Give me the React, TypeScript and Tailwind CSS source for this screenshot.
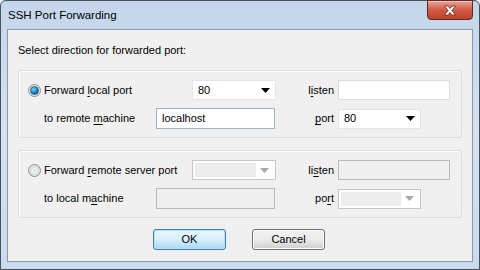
import React from "react";

const font = { fontFamily: '"Liberation Sans", Arial, sans-serif' };

function Radio({ checked }: { checked?: boolean }) {
  return (
    <svg width="13" height="13" viewBox="0 0 13 13" className="shrink-0">
      <defs>
        <radialGradient id="rbg" cx="50%" cy="50%" r="60%">
          <stop offset="0%" stopColor="#ffffff" />
          <stop offset="100%" stopColor="#d4d8dc" />
        </radialGradient>
        <radialGradient id="dot" cx="40%" cy="35%" r="70%">
          <stop offset="0%" stopColor="#7fd6f5" />
          <stop offset="55%" stopColor="#1e8fc6" />
          <stop offset="100%" stopColor="#0b4a78" />
        </radialGradient>
      </defs>
      <circle cx="6.5" cy="6.5" r="6" fill="url(#rbg)" stroke="#8e8f8f" strokeWidth="1" />
      {checked ? (
        <circle cx="6.5" cy="6.5" r="4" fill="url(#dot)" stroke="#0e4d7a" strokeWidth="0.6" />
      ) : (
        <circle cx="6.5" cy="6.5" r="4" fill="#e8eaec" stroke="#c4c7ca" strokeWidth="0.6" />
      )}
    </svg>
  );
}

function Arrow({ disabled }: { disabled?: boolean }) {
  return (
    <svg width="9" height="5" viewBox="0 0 9 5">
      <path d="M0 0 H9 L4.5 5 Z" fill={disabled ? "#a8a8a8" : "#000"} />
    </svg>
  );
}

function Combo({ w, value, disabled }: { w: string; value?: string; disabled?: boolean }) {
  if (disabled) {
    return (
      <div className={`${w} h-[20px] flex border border-[#c5c5c5] bg-white p-[2px]`}>
        <div className="flex-1 bg-[#ececec]" />
        <div className="w-[17px] flex items-center justify-center">
          <Arrow disabled />
        </div>
      </div>
    );
  }
  return (
    <div className={`${w} h-[20px] flex items-center border border-[#e4e4e4] bg-white pl-[5px] pr-[5px]`}>
      <span className="flex-1 text-[11px] text-black">{value}</span>
      <Arrow />
    </div>
  );
}

function Input({ w, value, disabled, h }: { w: string; value?: string; disabled?: boolean; h?: string }) {
  return (
    <div
      className={`${w} ${h ?? "h-[20px]"} flex items-center border pl-[5px] text-[11px] text-black ${
        disabled ? "border-[#b7b9bc] bg-[#f0f0f0]" : value ? "border-[#9eb3c7] bg-white" : "border-[#dcdcdc] bg-white"
      }`}
    >
      {value}
    </div>
  );
}

function U({ children }: { children: React.ReactNode }) {
  return <span className="underline underline-offset-[2px] decoration-[1px]">{children}</span>;
}

function Group({
  checked,
  label,
  sub,
  comboVal,
  inputVal,
  portVal,
  listenLabel,
  portLabel,
  disabled,
}: {
  checked?: boolean;
  label: React.ReactNode;
  sub: React.ReactNode;
  comboVal?: string;
  inputVal?: string;
  portVal?: string;
  listenLabel: React.ReactNode;
  portLabel: React.ReactNode;
  disabled?: boolean;
}) {
  return (
    <div className="ml-[10px] w-[444px] border border-[#d5dfe5] rounded-[3px] shadow-[inset_1px_1px_0_#ffffff] pt-[9px] pb-[8px] pl-[9px]">
      <div className="flex items-center h-[20px]">
        <Radio checked={checked} />
        <span className="ml-[3px] w-[148px] text-[11px] text-black leading-[14px]">{label}</span>
        <Combo w="w-[84px]" value={comboVal} disabled={disabled} />
        <span className="ml-[25px] w-[33px] text-right text-[11px] text-black">{listenLabel}</span>
        <div className="ml-[4px]">
          <Input w="w-[112px]" disabled={disabled} />
        </div>
      </div>
      <div className="flex items-center mt-[8px] h-[21px]">
        <span className="ml-[16px] w-[112px] text-[11px] text-black">{sub}</span>
        <Input w="w-[119px]" h="h-[21px]" value={inputVal} disabled={disabled} />
        <span className="ml-[26px] w-[33px] text-right text-[11px] text-black">{portLabel}</span>
        <div className="ml-[4px]">
          <Combo w="w-[83px]" value={portVal} disabled={disabled} />
        </div>
      </div>
    </div>
  );
}

function Button({ children, def }: { children: React.ReactNode; def?: boolean }) {
  return (
    <div
      className={`w-[73px] h-[21px] flex items-center justify-center rounded-[3px] border text-[11px] text-black ${
        def
          ? "border-[#3c7fb1] bg-gradient-to-b from-[#eaf6fd] via-[#d9f0fc] to-[#a7d9f5] shadow-[inset_0_0_0_1px_#b6e3fa]"
          : "border-[#707070] bg-gradient-to-b from-[#f2f2f2] via-[#ebebeb] to-[#cfcfcf] shadow-[inset_0_0_0_1px_#fcfcfc]"
      }`}
    >
      {children}
    </div>
  );
}

export default function App() {
  return (
    <div style={font} className="w-[480px] h-[270px] overflow-hidden bg-[#e8eef5]">
      <div className="w-[480px] h-[270px] flex flex-col rounded-t-[6px] border border-[#48515a] bg-gradient-to-b from-[#c4d6ec] via-[#d4e2f2] to-[#c9dcef]">
        <div className="h-[28px] flex items-start relative">
          <span className="ml-[7px] mt-[7px] text-[11.5px] text-black leading-[15px]">SSH Port Forwarding</span>
          <div className="absolute right-[6px] top-[-1px] w-[46px] h-[20px] rounded-b-[4px] border border-[#5b2b26] bg-gradient-to-b from-[#e8a294] via-[#d05a44] to-[#c2412b] shadow-[inset_0_1px_0_#f4c6bb] flex items-center justify-center">
            <svg width="14" height="11" viewBox="0 0 14 11">
              <path
                d="M1.5 1 L5 1 L7 3.5 L9 1 L12.5 1 L8.8 5.5 L12.5 10 L9 10 L7 7.5 L5 10 L1.5 10 L5.2 5.5 Z"
                fill="#ffffff"
                stroke="#5a2a22"
                strokeWidth="0.8"
                strokeLinejoin="round"
              />
            </svg>
          </div>
        </div>
        <div className="mx-[6px] h-[233px] border border-[#8b9aab] bg-[#f0f0f0] flex flex-col">
          <div className="ml-[10px] mt-[13px] text-[11px] text-black leading-[14px]">
            Select direction for forwarded port:
          </div>
          <div className="mt-[13px]">
            <Group
              checked
              label={
                <>
                  Forward <U>l</U>ocal port
                </>
              }
              sub={
                <>
                  to remote <U>m</U>achine
                </>
              }
              comboVal="80"
              inputVal="localhost"
              portVal="80"
              listenLabel={
                <>
                  l<U>i</U>sten
                </>
              }
              portLabel={
                <>
                  <U>p</U>ort
                </>
              }
            />
          </div>
          <div className="mt-[12px]">
            <Group
              disabled
              label={
                <>
                  Forward <U>r</U>emote server port
                </>
              }
              sub={
                <>
                  to local m<U>a</U>chine
                </>
              }
              listenLabel={
                <>
                  li<U>s</U>ten
                </>
              }
              portLabel={
                <>
                  po<U>r</U>t
                </>
              }
            />
          </div>
          <div className="flex mt-[11px] ml-[145px] gap-[26px]">
            <Button def>OK</Button>
            <Button>Cancel</Button>
          </div>
        </div>
      </div>
    </div>
  );
}
